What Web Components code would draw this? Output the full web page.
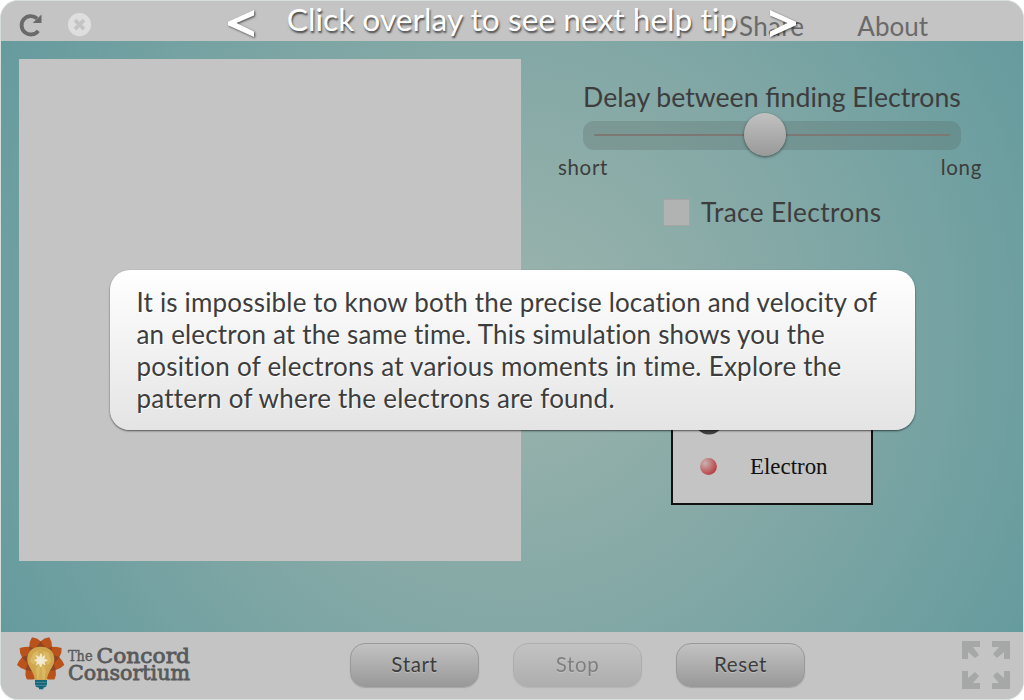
<!DOCTYPE html>
<html lang="en"><head><meta charset="utf-8"><title>Electron Probability</title>
<style>html,body{margin:0;height:100%;background:#fff;overflow:hidden}body{font-family:Lato,sans-serif;color:#3d3d3d}</style></head>
<body><lab-app></lab-app>
<script>
const define=(name,html)=>{const t=document.createElement('template');t.innerHTML=html;
customElements.define(name,class extends HTMLElement{constructor(){super();this.attachShadow({mode:'open'}).append(t.content.cloneNode(true));}});};

define('top-bar',`<style>:host{display:flex;height:40px;background:#c4c4c4;color:#6a6a6a;font-size:26px;line-height:32px;box-sizing:border-box}
.i{display:flex;padding:12px 0 0 18px;gap:25px;flex:1}.l{display:flex;gap:53px;padding:9px 95px 0 0}.l span:first-child{letter-spacing:.25px}svg{display:block}</style>
<div class="i"><svg width="24" height="24" viewBox="0 0 24 24"><path d="M19.200 17.800A9.200 9.200 0 1 1 18 5.500" fill="none" stroke="#6a6a6a" stroke-width="3.800"/><path d="M22.500 1.500v8.400h-8.800z" fill="#6a6a6a"/></svg>
<svg width="24" height="24" viewBox="0 0 24 24"><circle cx="11.500" cy="11.600" r="11.600" fill="#dedede"/><path d="M7 7.100l9 9m0-9l-9 9" stroke="#c4c4c4" stroke-width="3.700"/></svg></div>
<div class="l"><span>Share</span><span>About</span></div>`);

define('model-view',`<style>:host{display:block;width:502px;height:502px;background:#c4c4c4}</style>`);

define('delay-slider',`<style>:host{display:block;width:424px}.t{font-size:26.65px;line-height:32px;text-align:center;white-space:nowrap;padding-left:4px}
.b{box-sizing:border-box;margin:8px 21px 0 25px;height:29px;border-radius:11px;background:rgba(70,80,75,.2);display:grid;align-items:center;padding:0 11px 2px}
.r{height:2px;background:#7e7875;border-radius:1px;display:flex;align-items:center}.k{box-sizing:border-box;margin-left:150px;width:42px;height:43px;border-radius:50%;background:linear-gradient(#c1c1c1,#999);box-shadow:0 1px 3px rgba(0,0,0,.55);flex:none}
.e{display:flex;justify-content:space-between;font-size:20.5px;line-height:26px;letter-spacing:.65px;margin-top:4px}</style>
<div class="t"><slot></slot></div><div class="b"><div class="r"><div class="k"></div></div></div><div class="e"><slot name="min"></slot><slot name="max"></slot></div>`);

define('check-option',`<style>:host{display:flex;align-items:center;gap:11px;font-size:26.2px;letter-spacing:.4px;line-height:32px}i{width:25px;height:25px;border:1px solid #a9a4a4;background:#b1b3b2}</style><i></i><span><slot></slot></span>`);

define('atom-legend',`<style>:host{display:block;box-sizing:border-box;width:202px;height:115px;border:2px solid #111;background:#c4c4c4;color:#111;font:22.9px/28px "Liberation Serif",serif}
.n{height:43px;display:flex;padding-left:22px;align-items:flex-end}.n svg{display:block}.e{display:flex;align-items:center;padding:18px 0 0 27px;gap:33px}.e svg{margin-top:-2px}</style>
<div class="n"><svg width="28" height="29"><circle cx="14" cy="14" r="14.5" fill="#404040"/></svg></div>
<div class="e"><svg width="17" height="17"><defs><radialGradient id="g" cx=".3" cy=".3" r=".75"><stop offset="0" stop-color="#c9b2b2"/><stop offset="1" stop-color="#b93e42"/></radialGradient></defs><circle cx="8.5" cy="8.5" r="8.4" fill="url(#g)"/></svg><span>Electron</span></div>`);

define('push-button',`<style>:host{box-sizing:border-box;display:block;width:129px;height:44px;border:1px solid #999;border-radius:15px;background:linear-gradient(#c2c2c2,#999);box-shadow:0 1px 1px rgba(90,90,90,.3);text-align:center;font-size:20.5px;line-height:41px;letter-spacing:.65px;text-shadow:0 1px 1px rgba(220,220,220,.5)}:host([disabled]){opacity:.5}</style><slot></slot>`);

define('brand-logo',`<style>:host{display:block;color:#585a5b;font-family:"DejaVu Serif",serif}svg{display:block}</style>
<svg width="178" height="60" viewBox="0 0 178 60">
<g transform="translate(-5 -2) scale(.3333)"><path d="M92 34Q82 24 66 22Q58 34 58 50Q42 50 29 54Q28 68 36 82Q26 92 21 105Q32 116 47 120Q44 134 50 148Q62 150 78 146H106Q122 150 134 148Q140 134 137 120Q152 116 163 105Q158 92 148 82Q156 68 155 54Q142 50 126 50Q126 34 118 22Q102 24 92 34" fill="#b9521b"/>
<path d="M92 34L78 54H106zM58 50L60 72 76 56zM36 82L50 98 56 74zM47 120L68 124 54 98zM126 50L124 72 108 56zM148 82L134 98 128 74zM137 120L116 124 130 98z" fill="#8e4526"/>
<path d="M92 50C64 50 52 68 52 88C52 112 73 124 74 150H111C112 124 133 112 133 88C133 68 120 50 92 50" fill="#cfa64e"/>
<path d="M92 58L116 70 124 92 108 114 104 148H82L77 114 60 92 70 70z" fill="#dbb963"/>
<path d="M92 90L80 56H104zM92 90L62 108 74 128zM92 90L122 108 110 128zM92 90L86 148H98z" fill="#cfa64e" opacity=".7"/>
<path d="M93 71L96 84 104 77 101 87 112 91 101 95 105 104 96 99 92 111 88 99 79 104 83 95 74 91 84 87 79 77 88 83z" fill="#f2ead2" stroke="#f2ead2" stroke-width="3"/>
<path d="M75 150H111V162L108 170 100 173V178H87V173L78 170 75 162z" fill="#12677a"/><path d="M76 157H110M77 166H108" stroke="#6f9aa2" stroke-width="2"/></g>
<g fill="currentColor" stroke="currentColor" stroke-width=".8"><text x="53" y="28.800" font-size="14" stroke-width=".4" textLength="24.500" lengthAdjust="spacingAndGlyphs">The</text><text x="81.500" y="30.500" font-size="20.800" textLength="93.500" lengthAdjust="spacingAndGlyphs">Concord</text><text x="53" y="47.800" font-size="20.800" textLength="122" lengthAdjust="spacingAndGlyphs">Consortium</text></g></svg>`);

define('full-screen',`<style>:host{display:block}svg{display:block}</style><svg width="48" height="48" viewBox="0 0 48 48" fill="#a5a8a7"><path d="M0 0H18V6H11L17 14 13 17 6 11V18H0z"/><path d="M48 0V18H42V11L35 17 31 13 37 6H30V0z"/><path d="M0 48V30H6V37L13 31 17 35 11 42H18V48z"/><path d="M48 48H30V42H37L31 35 35 31 42 37V30H48z"/></svg>`);

define('bottom-bar',`<style>:host{display:flex;height:67px;box-sizing:border-box;background:#c4c4c4;align-items:flex-start}
.g{display:flex;gap:34px;margin-left:159px;padding-top:11px}full-screen{margin:9px 13px 0 auto}brand-logo{margin-left:14px;width:176px;flex:none}</style>
<brand-logo></brand-logo><div class="g"><push-button>Start</push-button><push-button disabled>Stop</push-button><push-button>Reset</push-button></div><full-screen></full-screen>`);

define('help-overlay',`<style>:host{position:absolute;inset:0;display:flex;flex-direction:column;align-items:center;font-variant-ligatures:none}
.h{display:flex;width:570px;height:41px;box-sizing:border-box;justify-content:space-between;color:#fff;font-size:31.7px;line-height:36px;text-shadow:1px 2px 2px rgba(0,0,0,.65)}
svg{display:block;margin-top:8px;filter:drop-shadow(1px 1px 1px rgba(0,0,0,.6))}.h span{white-space:nowrap}
.c{box-sizing:border-box;margin-top:228px;width:805px;height:160px;border-radius:20px;background:linear-gradient(#fff,#e4e4e4);box-shadow:0 1px 2px rgba(0,0,0,.6);padding:16px 20px 0 27px;font-size:26px;line-height:32px;text-shadow:1px 1px 1px #fff;white-space:nowrap}</style>
<div class="h"><svg width="28" height="30"><path d="M27 1v5.500L9.500 14 27 22.500V28L1 16.200V12.800z" fill="#fff"/></svg><span>Click overlay to see next help tip</span><svg width="28" height="30"><path d="M1 1v5.500L18.500 14 1 22.500V28L27 16.200V12.800z" fill="#fff"/></svg></div>
<div class="c"><slot></slot></div>`);

define('lab-app',`<style>:host{display:flex;flex-direction:column;position:relative;box-sizing:border-box;width:1024px;height:700px;border:1px solid #d5dedc;border-radius:18px;overflow:hidden;background:#c4c4c4}
.m{display:flex;height:591px;box-sizing:border-box;padding:18px;background:radial-gradient(circle farthest-corner at 50% 50%,#9db4ad 0%,#83a8a6 50%,#669b9e 100%)}
.r{display:flex;flex-direction:column;align-items:flex-start;margin-left:37px;padding-top:22px}check-option{margin:16px 0 0 105px}atom-legend{margin:162px 0 0 113px}
.w{letter-spacing:.18px}.x{letter-spacing:.24px}</style>
<top-bar></top-bar><div class="m"><model-view></model-view><div class="r"><delay-slider>Delay between finding Electrons<span slot="min">short</span><span slot="max">long</span></delay-slider><check-option>Trace Electrons</check-option><atom-legend></atom-legend></div></div><bottom-bar></bottom-bar>
<help-overlay><span class="w">It is impossible to know both the precise location and velocity of</span><br><span class="w">an electron at the same time. This simulation shows you the</span><br><span class="x">position of electrons at various moments in time. Explore the</span><br><span class="x">pattern of where the electrons are found.</span></help-overlay>`);
</script></body></html>
